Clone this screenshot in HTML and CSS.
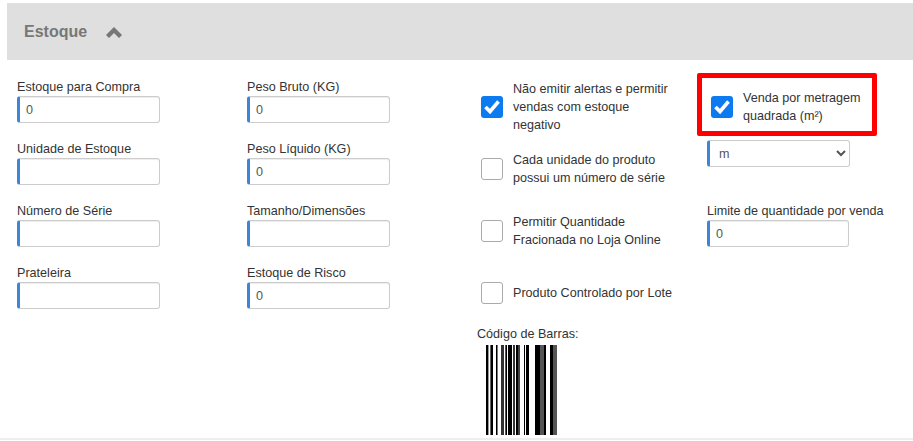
FILE: index.html
```html
<!DOCTYPE html>
<html lang="pt">
<head>
<meta charset="utf-8">
<title>Estoque</title>
<link rel="stylesheet" href="styles.css">
</head>
<body>
<div class="page">
  <header class="head">
    <h2 class="head-title">Estoque</h2>
    <svg class="chev" width="16" height="11" viewBox="0 0 16 11"><path d="M0 8 8 0l8 8-3 3-5-5-5 5z" fill="#777"/></svg>
  </header>
  <div class="cols">
    <div class="col">
      <div class="field"><label class="lbl">Estoque para Compra</label><input class="inp" value="0"></div>
      <div class="field"><label class="lbl">Unidade de Estoque</label><input class="inp"></div>
      <div class="field"><label class="lbl">Número de Série</label><input class="inp"></div>
      <div class="field"><label class="lbl">Prateleira</label><input class="inp"></div>
    </div>
    <div class="col">
      <div class="field"><label class="lbl">Peso Bruto (KG)</label><input class="inp" value="0"></div>
      <div class="field"><label class="lbl">Peso Líquido (KG)</label><input class="inp" value="0"></div>
      <div class="field"><label class="lbl">Tamanho/Dimensões</label><input class="inp"></div>
      <div class="field"><label class="lbl">Estoque de Risco</label><input class="inp" value="0"></div>
    </div>
    <div class="col col-checks">
      <div class="check">
        <span class="box on"><svg width="22" height="22" viewBox="0 0 22 22"><path d="M4.500 11 9 15.500l8.500-10" fill="none" stroke="#fff" stroke-width="3.600"/></svg></span>
        <span class="check-text">Não emitir alertas e permitir vendas com estoque negativo</span>
      </div>
      <div class="check">
        <span class="box"></span>
        <span class="check-text">Cada unidade do produto possui um número de série</span>
      </div>
      <div class="check">
        <span class="box"></span>
        <span class="check-text">Permitir Quantidade Fracionada no Loja Online</span>
      </div>
      <div class="check">
        <span class="box"></span>
        <span class="check-text wide">Produto Controlado por Lote</span>
      </div>
      <div class="barcode-wrap">
        <div class="barcode-label">Código de Barras:</div>
        <svg class="barcode" width="72" height="90" viewBox="0 0 72 90">
          <g fill="#000">
            <rect x="0" width="2" height="90"/><rect x="2" width="1" height="90" fill="#999"/>
            <rect x="4" width="1" height="90" fill="#666"/><rect x="5" width="2" height="90"/>
            <rect x="10" width="1" height="90"/><rect x="11" width="1" height="90" fill="#777"/>
            <rect x="15" width="3" height="90" fill="#333"/><rect x="19" width="1" height="90" fill="#555"/><rect x="20" width="1" height="90"/>
            <rect x="22" width="4" height="90"/><rect x="27" width="2" height="90" fill="#333"/>
            <rect x="30" width="2" height="90"/><rect x="32" width="2" height="90" fill="#444"/>
            <rect x="38" width="1" height="90"/><rect x="40" width="3" height="90"/>
            <rect x="49" width="5" height="90"/><rect x="54" width="4" height="90" fill="#555"/><rect x="58" width="2" height="90"/>
            <rect x="64" width="3" height="90"/><rect x="67" width="4" height="90" fill="#555"/>
          </g>
        </svg>
      </div>
    </div>
    <div class="col col-last">
      <div class="highlight">
        <span class="box on"><svg width="22" height="22" viewBox="0 0 22 22"><path d="M4.500 11 9 15.500l8.500-10" fill="none" stroke="#fff" stroke-width="3.600"/></svg></span>
        <span class="check-text">Venda por metragem quadrada (m²)</span>
      </div>
      <select class="sel"><option>m</option></select>
      <div class="field limit"><label class="lbl">Limite de quantidade por venda</label><input class="inp inp-narrow" value="0"></div>
    </div>
  </div>
  <div class="rule"></div>
</div>
</body>
</html>
```
FILE: styles.css
```css
* { box-sizing: border-box; }
html, body { margin: 0; padding: 0; background: #fff; overflow: hidden; }
body { font-family: "Liberation Sans", Arial, sans-serif; font-size: 12.600px; color: #333; }
.page { width: 913px; height: 441px; padding-top: 3px; overflow: hidden; }
.head { margin-left: 7px; height: 57px; background: #dfdfdf; display: flex; align-items: center; padding-left: 17px; gap: 19px; }
.head-title { margin: 0; font-size: 16px; font-weight: 700; color: #777; line-height: 20px; }
.chev { display: block; margin-top: 1px; }
.cols { display: grid; grid-template-columns: repeat(4, 230px); padding: 18px 0 0 17px; height: 378px; }
.col { display: flex; flex-direction: column; }
.field { height: 62px; }
.lbl { display: block; height: 18px; line-height: 18px; color: #333; }
.inp { display: block; width: 143px; height: 27px; border: 1px solid #ccc; border-left: 3px solid #3d85d6; border-radius: 3px; padding: 0 6px; font: 12.600px "Liberation Sans", Arial, sans-serif; color: #555; outline: none; box-shadow: inset 0 1px 1px rgba(0,0,0,.075); background: #fff; }
.inp-narrow { width: 142px; }
.col-checks { padding-left: 4px; margin-top: -2px; }
.check { height: 62px; display: flex; align-items: center; gap: 10px; }
.box { flex: none; width: 22px; height: 22px; border: 1px solid #aaa; border-radius: 3px; background: #fff; display: block; }
.box.on { background: #0d7bf0; border: 0; }
.box svg { display: block; }
.check-text { width: 162px; line-height: 18px; color: #333; }
.check-text.wide { width: 170px; }
.barcode-wrap { margin: 2px 0 0 -4px; }
.barcode-label { line-height: 16px; color: #333; }
.barcode { display: block; margin: 3px 0 0 9px; shape-rendering: crispEdges; }
.highlight { width: 180px; height: 63px; margin-top: -5px; margin-left: -10px; border: 5px solid #f00; display: flex; align-items: center; gap: 10px; padding: 4px 0 0 9px; border-radius: 2px; background: #fff; }
.highlight .check-text { width: 130px; }
.sel { display: block; width: 143px; height: 27px; margin-top: 4px; border: 1px solid #ccc; border-left: 3px solid #3d85d6; border-radius: 3px; padding: 0 5px; font: 12.600px "Liberation Sans", Arial, sans-serif; color: #555; background: #fff; }
.limit { margin-top: 35px; }
.rule { height: 2px; background: #eee; }
```
